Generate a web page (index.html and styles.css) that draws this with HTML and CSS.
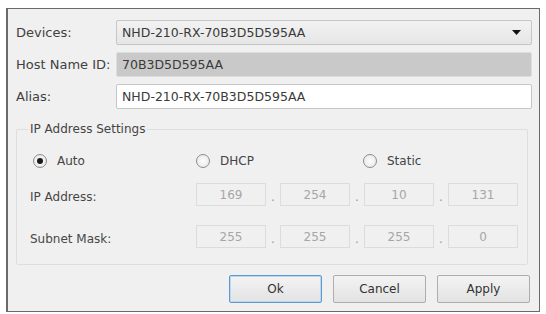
FILE: index.html
```html
<!DOCTYPE html>
<html lang="en">
<head>
    <meta charset="UTF-8">
    <title>Device Settings</title>
    <link rel="stylesheet" href="styles.css">
</head>
<body>
<div class="dialog">
    <div class="fields">
        <label class="lbl">Devices:</label>
        <div class="combo">
            <span>NHD-210-RX-70B3D5D595AA</span>
            <svg class="arrow" width="9" height="5" viewBox="0 0 9 5"><path d="M0 0H9L4.5 5Z"/></svg>
        </div>
        <label class="lbl">Host Name ID:</label>
        <div class="field readonly">70B3D5D595AA</div>
        <label class="lbl">Alias:</label>
        <div class="field">NHD-210-RX-70B3D5D595AA</div>
    </div>

    <fieldset class="group">
        <legend>IP Address Settings</legend>
        <div class="radios">
            <label class="radio"><span class="dot checked"></span>Auto</label>
            <label class="radio"><span class="dot"></span>DHCP</label>
            <label class="radio"><span class="dot"></span>Static</label>
        </div>
        <div class="iprow">
            <span class="iplbl">IP Address:</span>
            <div class="octets">
                <span class="oct">169</span><span class="sep">.</span>
                <span class="oct">254</span><span class="sep">.</span>
                <span class="oct">10</span><span class="sep">.</span>
                <span class="oct">131</span>
            </div>
        </div>
        <div class="iprow mask">
            <span class="iplbl">Subnet Mask:</span>
            <div class="octets">
                <span class="oct">255</span><span class="sep">.</span>
                <span class="oct">255</span><span class="sep">.</span>
                <span class="oct">255</span><span class="sep">.</span>
                <span class="oct">0</span>
            </div>
        </div>
    </fieldset>

    <div class="buttons">
        <button class="btn default">Ok</button>
        <button class="btn">Cancel</button>
        <button class="btn">Apply</button>
    </div>
</div>
</body>
</html>
```

FILE: styles.css
```css
body{margin:8px 6px 0 6px;background:#fff;font-family:"DejaVu Sans",Tahoma,sans-serif;color:#404040;}

.dialog{box-sizing:border-box;height:304px;border:1px solid #6a6a6a;border-left-width:2px;background:#f0f0f0;display:flex;flex-direction:column;}

/* top form */
.fields{display:grid;grid-template-columns:100px 1fr;grid-auto-rows:25px;row-gap:7px;padding:11px 7px 0 8px;}
.lbl{font-size:13px;display:flex;align-items:center;}
.combo,.field{box-sizing:border-box;display:flex;align-items:center;padding-left:5px;font-size:12.5px;color:#3a3a3a;border:1px solid #c6c6c6;border-radius:2px;}
.combo{background:linear-gradient(#f2f2f2,#e6e6e6);justify-content:space-between;padding-right:10px;}
.arrow{fill:#111;}
.field{background:#fff;}
.field.readonly{background:#c9c9c9;border-color:#dedede;}

/* group box */
.group{margin:13px 11px 0 8px;padding:0 0 16px 13px;border:1px solid #dedede;border-radius:2px;min-width:0;}
.group legend{font-size:12px;line-height:14px;padding:0 2px;margin-left:-2px;color:#444;}
.radios{display:grid;grid-template-columns:163px 167px auto;height:20px;margin:15px 0 0 3px;}
.radio{display:flex;align-items:center;gap:10px;font-size:12px;color:#444;}
.dot{box-sizing:border-box;width:14px;height:14px;border-radius:50%;border:1px solid #8c8c8c;background:radial-gradient(#fdfdfd,#e4e4e4);display:flex;align-items:center;justify-content:center;}
.dot.checked::after{content:"";width:6px;height:6px;border-radius:50%;background:#1a1a1a;}

.iprow{display:grid;grid-template-columns:166px auto;height:23px;margin-top:12px;}
.iprow.mask{margin-top:19px;}
.iplbl{font-size:12px;display:flex;align-items:center;color:#474747;}
.octets{display:flex;}
.oct{box-sizing:border-box;width:70px;height:23px;border:1px solid #dcdcdc;display:flex;align-items:center;justify-content:center;font-size:12px;color:#a6a6a6;}
.sep{width:14px;text-align:center;color:#9a9a9a;font-size:12px;line-height:28px;}

/* buttons */
.buttons{display:flex;justify-content:flex-end;gap:11px;margin-top:10px;padding-right:9px;}
.btn{box-sizing:border-box;width:93px;height:28px;font-family:inherit;font-size:12px;color:#333;background:linear-gradient(#f3f3f3,#e3e3e3);border:1px solid #adadad;border-radius:2px;}
.btn.default{border-color:#5b9bd1;box-shadow:inset 0 0 0 1px #bcd8ee;}
```
